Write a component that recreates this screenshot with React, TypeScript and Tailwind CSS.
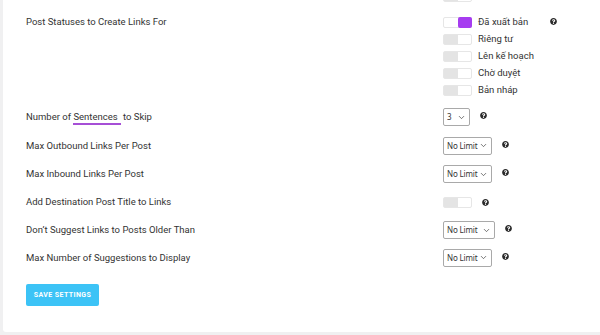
import { FaQuestionCircle } from 'react-icons/fa';
import { ChevronDown } from 'lucide-react';

const font = { fontFamily: 'Roboto, "Noto Sans", sans-serif' };

function Help({ className = '' }: { className?: string }) {
  return <FaQuestionCircle className={'text-[#2c2c2c] ' + className} size={7} />;
}

function Toggle({ on = false }: { on?: boolean }) {
  return (
    <div className="flex h-[11px] w-[29px] rounded-[2px] border border-[#e6e6e6] bg-white">
      {on ? (
        <>
          <div className="flex-1" />
          <div className="w-[14px] -my-px -mr-px rounded-[2px] bg-[#a63cf0]" />
        </>
      ) : (
        <>
          <div className="w-[14px] bg-[#e4e4e4]" />
          <div className="flex-1" />
        </>
      )}
    </div>
  );
}

function Select({ value, width }: { value: string; width: string }) {
  return (
    <div
      className={
        'flex h-[18px] items-center justify-between whitespace-nowrap rounded-[2px] border border-[#a9a9a9] bg-white pl-[3px] pr-[3px] text-[8px] tracking-[-0.02em] text-[#333] ' +
        width
      }
      style={{ fontFamily: '"Noto Sans", "Open Sans", sans-serif' }}
    >
      <span>{value}</span>
      <ChevronDown className="shrink-0" size={9} strokeWidth={1.75} />
    </div>
  );
}

function Row({ label, children, h = 'h-[28.5px]' }: { label: React.ReactNode; children: React.ReactNode; h?: string }) {
  return (
    <div className={'flex items-center ' + h}>
      <div className="w-[417px] shrink-0 text-[9.5px] text-[#333]">{label}</div>
      <div className="flex items-center">{children}</div>
    </div>
  );
}

const statuses = ['Đã xuất bản', 'Riêng tư', 'Lên kế hoạch', 'Chờ duyệt', 'Bản nháp'];

export default function App() {
  return (
    <div className="h-[335px] w-[600px] overflow-hidden bg-[#f0f0f1] pl-[3px]" style={font}>
      <div className="flex h-[332px] flex-col items-start rounded-bl-[3px] bg-white pl-[23px]">
        <div className="flex -mt-[9px] pl-[417px]">
          <Toggle />
        </div>

        <div className="mt-[12px] flex">
          <div className="w-[417px] shrink-0 pt-[1px] text-[9.5px] text-[#333]">Post Statuses to Create Links For</div>
          <div className="flex flex-col">
            {statuses.map((s, i) => (
              <div key={s} className="flex h-[17px] items-center">
                <Toggle on={i === 0} />
                <span className="ml-[6px] text-[9.5px] text-[#333]">{s}</span>
                {i === 0 && <Help className="ml-[22px] -mt-[3px]" />}
              </div>
            ))}
          </div>
        </div>

        <div className="mt-[4px]">
          <Row
            label={
              <>
                Number of{' '}
                <span className="border-b-2 border-[#a64fd6] pb-[1px] pr-[3px]">Sentences</span> to Skip
              </>
            }
          >
            <Select value="3" width="w-[27px]" />
            <Help className="ml-[10px] -mt-[3px]" />
          </Row>
          <Row label="Max Outbound Links Per Post">
            <Select value="No Limit" width="w-[49px]" />
            <Help className="ml-[10px] -mt-[3px]" />
          </Row>
          <Row label="Max Inbound Links Per Post">
            <Select value="No Limit" width="w-[49px]" />
            <Help className="ml-[10px] -mt-[3px]" />
          </Row>
          <Row label="Add Destination Post Title to Links" h="h-[28px]">
            <Toggle />
            <Help className="ml-[10px]" />
          </Row>
          <Row label="Don’t Suggest Links to Posts Older Than" h="h-[27px]">
            <Select value="No Limit" width="w-[52px]" />
            <Help className="ml-[10px] -mt-[3px]" />
          </Row>
          <Row label="Max Number of Suggestions to Display">
            <Select value="No Limit" width="w-[49px]" />
            <Help className="ml-[10px] -mt-[3px]" />
          </Row>
        </div>

        <button className="mt-[12px] h-[22px] w-[73px] rounded-[2px] bg-[#3cc3f6] text-[7px] font-bold uppercase tracking-[0.06em] text-white">
          Save Settings
        </button>
      </div>
    </div>
  );
}
